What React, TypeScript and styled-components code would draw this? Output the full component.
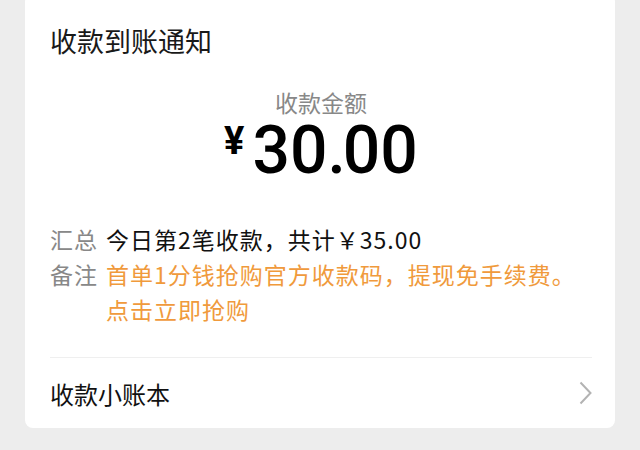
import React from 'react'
import styled, { createGlobalStyle } from 'styled-components'

const GlobalStyle = createGlobalStyle`
  html, body {
    margin: 0;
    padding: 0;
    background: #ededed;
  }
  body {
    width: 640px;
    height: 450px;
    overflow: hidden;
    font-family: "Noto Sans CJK SC", "Noto Sans", sans-serif;
  }
`

const Page = styled.div`
  padding: 0 25px;
`

const Card = styled.div`
  margin-top: -6px;
  background: #ffffff;
  border-radius: 8px;
  padding: 29px 23px 0 25px;
`

const Title = styled.div`
  font-size: 27px;
  line-height: 36px;
  color: #191919;
`

const AmountBlock = styled.div`
  display: flex;
  flex-direction: column;
  align-items: center;
  margin-top: 29px;
`

const AmountLabel = styled.div`
  font-size: 23px;
  line-height: 28px;
  color: #888888;
`

const AmountRow = styled.div`
  display: flex;
  align-items: flex-start;
  margin-top: 4px;
  font-family: Roboto, "Noto Sans", sans-serif;
  color: #000000;
`

const Currency = styled.span`
  font-size: 38px;
  line-height: 38px;
  font-weight: 700;
  margin-top: 2px;
  margin-right: 8px;
`

const Figure = styled.span`
  font-size: 66px;
  line-height: 62px;
  font-weight: 500;
`

const Dot = styled.span`
  letter-spacing: -3px;
`

const Details = styled.div`
  margin-top: 40px;
  display: flex;
  flex-direction: column;
`

const DetailRow = styled.div`
  display: flex;
  align-items: flex-start;
  font-size: 23px;
  line-height: 35px;
  letter-spacing: 1px;
`

const DetailLabel = styled.span`
  flex: none;
  width: 56px;
  color: #888888;
`

const DetailValue = styled.span<{ $accent?: boolean }>`
  flex: 1;
  color: ${({ $accent }) => ($accent ? '#f09a3c' : '#111111')};
`

const Divider = styled.div`
  margin-top: 30px;
  height: 1px;
  background: #efefef;
`

const LinkRow = styled.div`
  height: 70px;
  display: flex;
  align-items: center;
  justify-content: space-between;
  font-size: 24px;
  color: #111111;
`

const Chevron = () => (
  <svg width="13" height="24" viewBox="0 0 13 24">
    <polyline
      points="1.5,1.5 11.5,12 1.5,22.5"
      fill="none"
      stroke="#b3b3b3"
      strokeWidth="2"
    />
  </svg>
)

export default function App() {
  return (
    <Page>
      <GlobalStyle />
      <Card>
        <Title>收款到账通知</Title>
        <AmountBlock>
          <AmountLabel>收款金额</AmountLabel>
          <AmountRow>
            <Currency>¥</Currency>
            <Figure>
              30<Dot>.</Dot>00
            </Figure>
          </AmountRow>
        </AmountBlock>
        <Details>
          <DetailRow>
            <DetailLabel>汇总</DetailLabel>
            <DetailValue>今日第2笔收款，共计￥35.00</DetailValue>
          </DetailRow>
          <DetailRow>
            <DetailLabel>备注</DetailLabel>
            <DetailValue $accent>
              首单1分钱抢购官方收款码，提现免手续费。
              <br />
              点击立即抢购
            </DetailValue>
          </DetailRow>
        </Details>
        <Divider />
        <LinkRow>
          <span>收款小账本</span>
          <Chevron />
        </LinkRow>
      </Card>
    </Page>
  )
}
